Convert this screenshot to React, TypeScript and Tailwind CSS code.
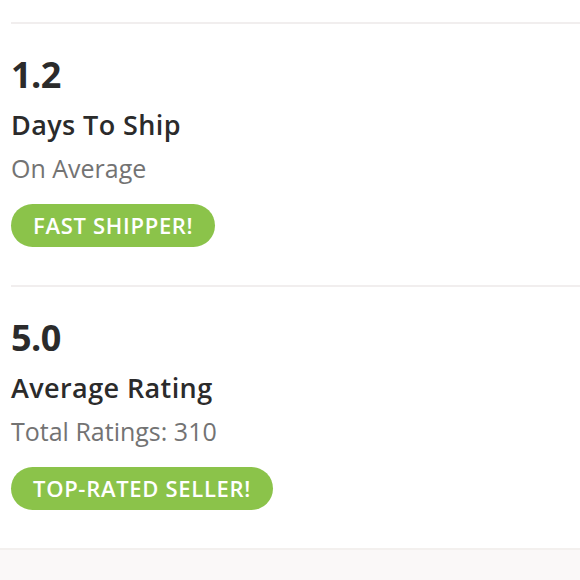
const stats = [
  { value: "1.2", label: "Days To Ship", sub: "On Average", badge: "FAST SHIPPER!" },
  { value: "5.0", label: "Average Rating", sub: "Total Ratings: 310", badge: "TOP-RATED SELLER!" },
];

export default function App() {
  return (
    <div
      className="min-h-[580px] w-[580px] bg-white text-[#2b2b2b] flex flex-col"
      style={{ fontFamily: '"Open Sans", "Noto Sans", sans-serif' }}
    >
      <div className="pt-[22px] pl-[11px]">
        {stats.map((s) => (
          <div key={s.value} className="border-t-2 border-[#f1eeee] pt-[29px] pb-[38px]">
            <p className="text-[36px] font-bold leading-[44px] tracking-[-0.5px]">{s.value}</p>
            <p className="mt-[11px] text-[27px] font-semibold leading-[33px] tracking-[0.4px]">{s.label}</p>
            <p className="mt-[12px] text-[25px] leading-[30px] text-[#737373]">{s.sub}</p>
            <div className="mt-[21px] inline-flex h-[43px] items-center rounded-full bg-[#8bc34a] px-[22px] text-[22px] font-semibold tracking-[0.7px] text-white">
              {s.badge}
            </div>
          </div>
        ))}
      </div>
      <div className="flex-1 border-t-2 border-[#f3f0ee] bg-[#faf8f8]" />
    </div>
  );
}
